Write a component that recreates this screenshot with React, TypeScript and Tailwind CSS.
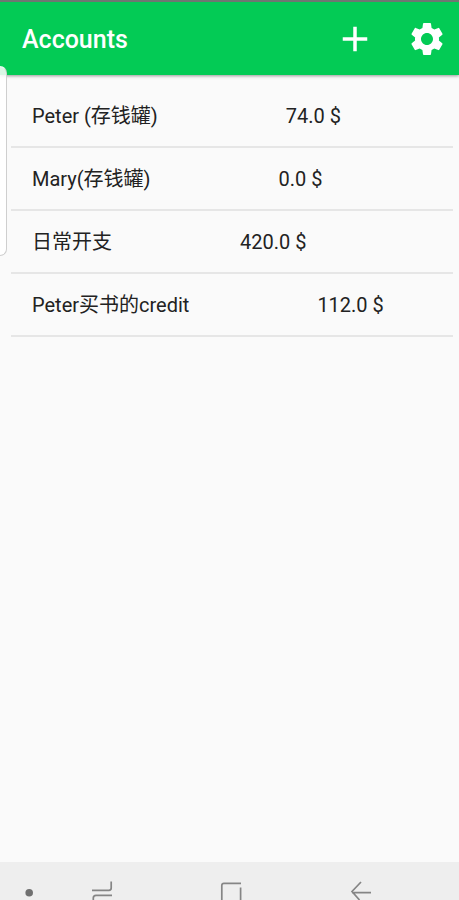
import React from 'react';
import { MdAdd, MdSettings } from 'react-icons/md';

interface Account {
  id: number;
  name: string;
  balance: number;
}

const accounts: Account[] = [
  { id: 1, name: 'Peter (存钱罐)', balance: 74 },
  { id: 2, name: 'Mary(存钱罐)', balance: 0 },
  { id: 3, name: '日常开支', balance: 420 },
  { id: 4, name: 'Peter买书的credit', balance: 112 },
];

function Header() {
  return (
    <header className="flex h-[75px] shrink-0 items-center border-t-2 border-[#6f7672] bg-[#03cb55] pr-3 pl-[22px] text-white shadow-[0_1px_3px_rgba(0,0,0,0.4)]">
      <h1 className="mt-[3px] flex-1 text-[25px] leading-[30px] font-medium">Accounts</h1>
      <button type="button" aria-label="Add account" className="mr-[31px]">
        <MdAdd className="size-[42px]" />
      </button>
      <button type="button" aria-label="Settings">
        <MdSettings className="size-10" />
      </button>
    </header>
  );
}

function AccountRow({ account }: { account: Account }) {
  return (
    <li className="flex h-[63px] items-center border-b-2 border-[#e6e6e6] pl-[21px] text-[20px] whitespace-nowrap text-[#222]">
      <span>{account.name}</span>
      <span className="ml-[128px]">{account.balance.toFixed(1)} $</span>
    </li>
  );
}

function NavigationBar() {
  return (
    <nav className="h-[38px] shrink-0 overflow-hidden bg-[#eeeeee]">
      <svg width="459" height="38" viewBox="0 0 459 38" fill="none" stroke="#858585" strokeWidth="1.7">
        <circle cx="29.2" cy="30.7" r="3.8" fill="#707070" stroke="none" />
        <path d="M92 28.3H109Q111.2 28.3 111.2 26V19.5" />
        <path d="M112 33.3H96Q93.3 33.3 93.3 36V38" />
        <path d="M221.8 38V23.5Q221.8 21.3 224 21.3H241M240.6 25.5V38" />
        <path d="M361 20L352 29.5L359.5 38M352 30.6H371" />
      </svg>
    </nav>
  );
}

export default function App() {
  return (
    <div className="relative flex h-[900px] w-[459px] flex-col overflow-hidden bg-[#fafafa] font-['Roboto','Noto_Sans_CJK_SC',sans-serif]">
      <Header />
      <ul className="mt-[10px] mr-[6px] ml-[11px] flex-1">
        {accounts.map((account) => (
          <AccountRow key={account.id} account={account} />
        ))}
      </ul>
      <NavigationBar />
      {/* edge panel handle */}
      <div className="absolute top-[66px] -left-2 h-[190px] w-[15px] rounded-r-[7px] border border-[#cfcfcf] border-t-white/60 bg-white/85" />
    </div>
  );
}
